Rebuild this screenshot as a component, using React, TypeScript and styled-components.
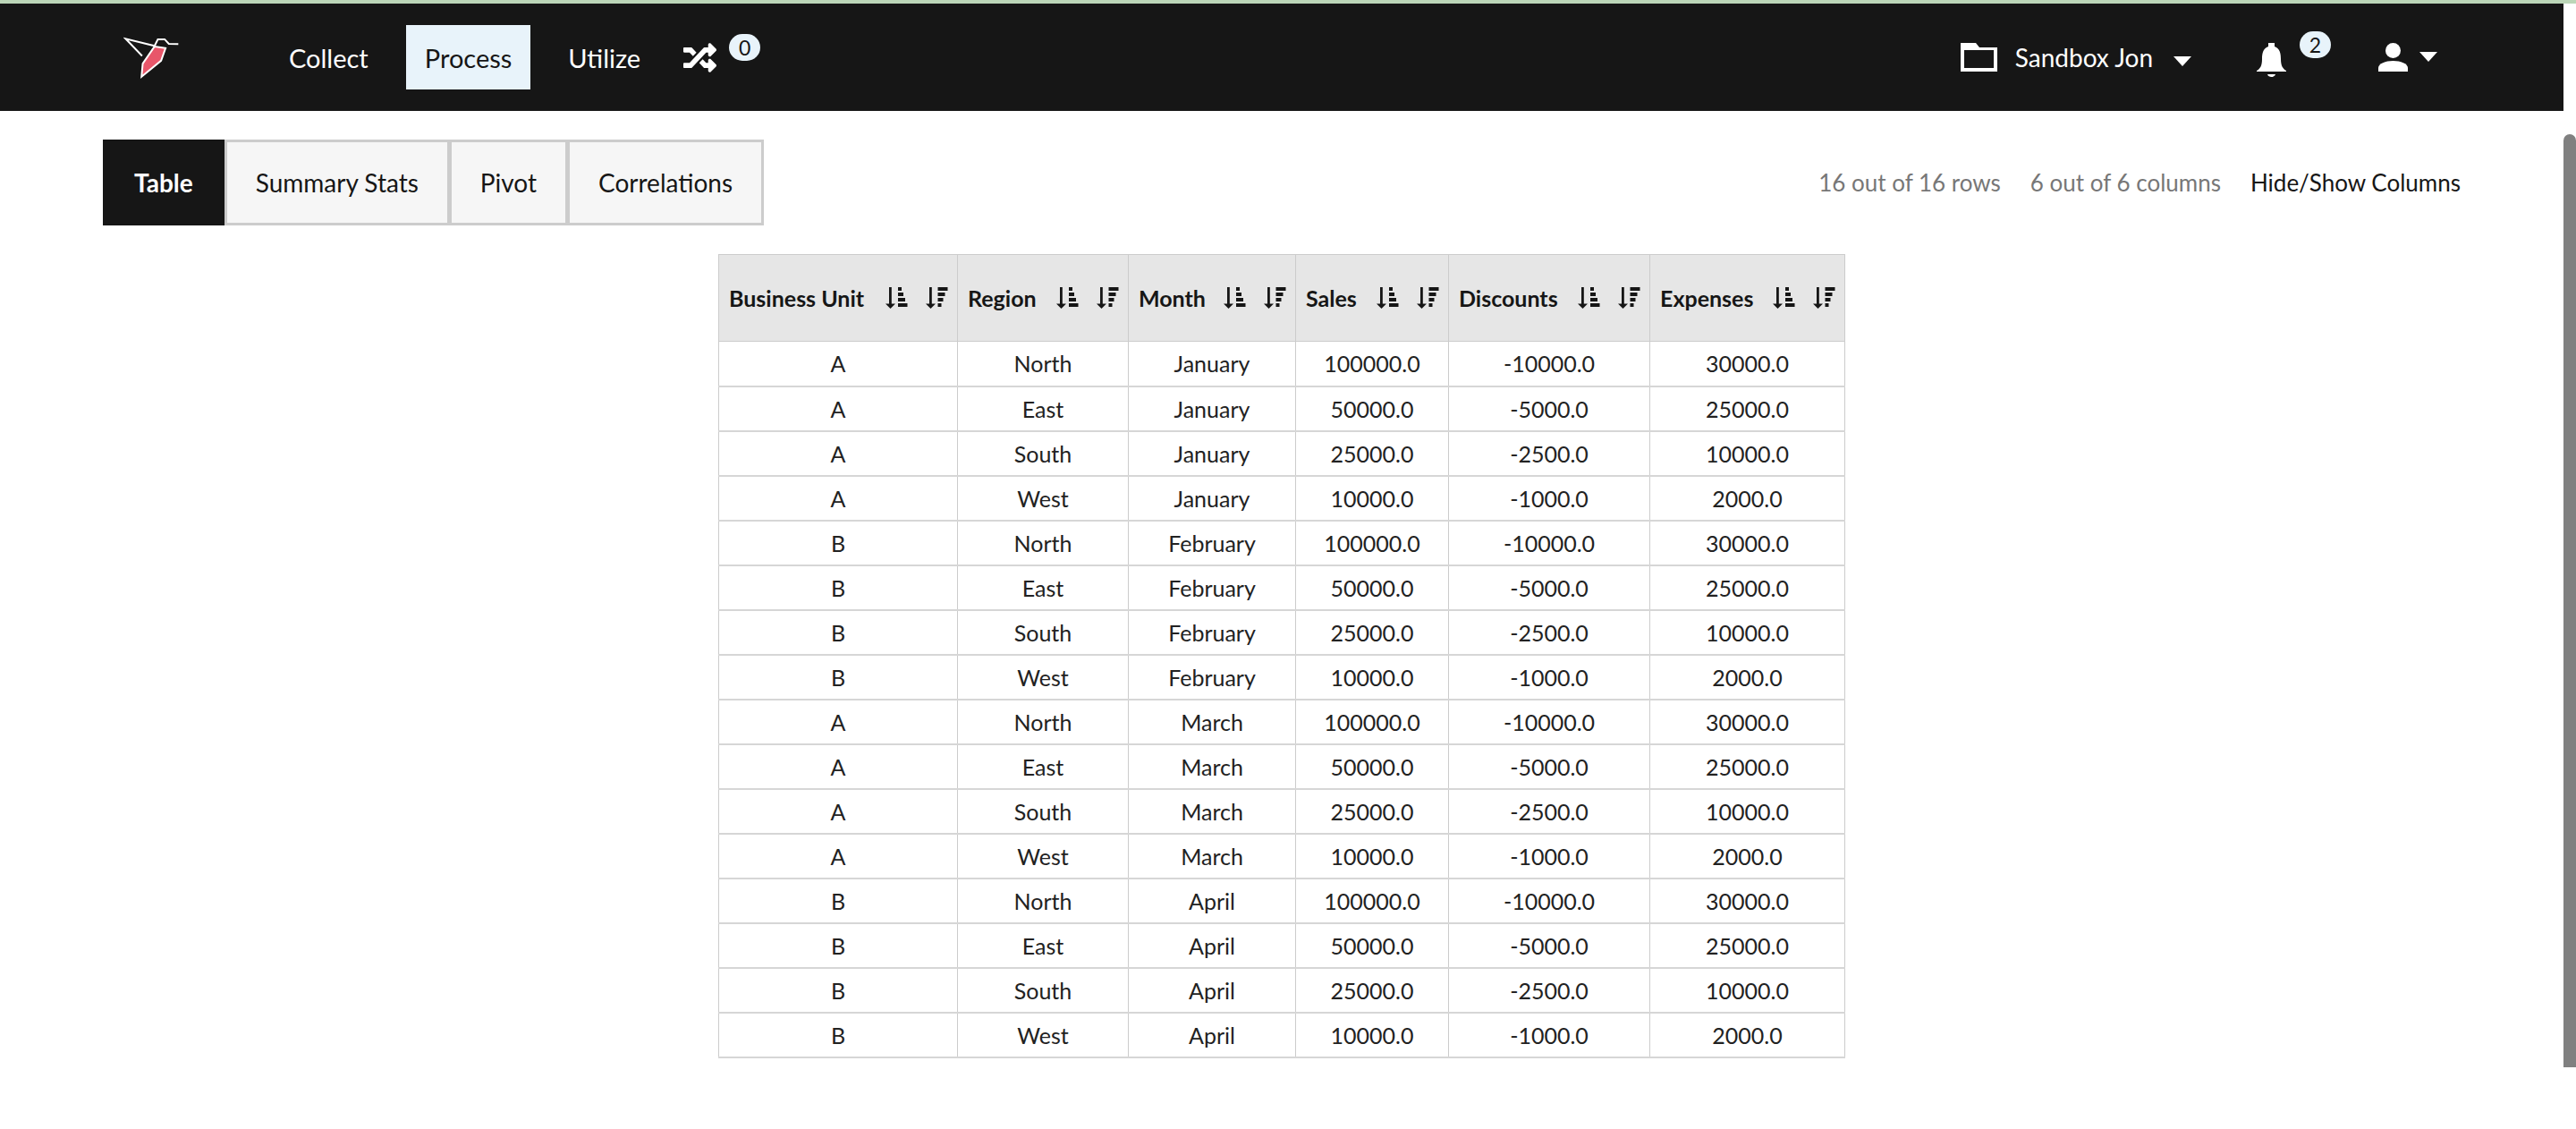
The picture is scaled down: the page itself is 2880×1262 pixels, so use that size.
import React from 'react'
import styled, { createGlobalStyle } from 'styled-components'
import { FaRandom } from 'react-icons/fa'

const GlobalStyle = createGlobalStyle`
  html, body {
    margin: 0;
    padding: 0;
    background: #fff;
    overflow: hidden;
    font-family: 'Lato', 'Liberation Sans', sans-serif;
  }
`

const Page = styled.div`
  width: 2880px;
  height: 1262px;
  display: flex;
  flex-direction: column;
  overflow: hidden;
`

const TopStrip = styled.div`
  height: 4px;
  flex: none;
  background: #bcd6b8;
`

const Body = styled.div`
  flex: 1;
  display: flex;
  min-height: 0;
`

const Main = styled.div`
  flex: 1;
  min-width: 0;
`

const ScrollTrack = styled.div`
  width: 14px;
  flex: none;
  padding-top: 146px;
`

const ScrollThumb = styled.div`
  height: 1043px;
  background: #808080;
  border-radius: 7px 7px 0 0;
`

const Header = styled.header`
  height: 120px;
  background: #161616;
  display: flex;
  align-items: center;
  padding: 0 141px 0 138px;
  box-sizing: border-box;
  color: #fff;
`

const Nav = styled.nav`
  display: flex;
  align-items: center;
  gap: 21px;
  margin-left: 101px;
`

const NavItem = styled.a<{ $active?: boolean }>`
  height: 72px;
  padding: 0 21px;
  display: flex;
  align-items: center;
  font-size: 29px;
  color: ${props => (props.$active ? '#161616' : '#fff')};
  background: ${props => (props.$active ? '#e8f3fa' : 'transparent')};
`

const IconBadgeWrap = styled.span<{ $left: number; $top: number }>`
  position: relative;
  display: flex;
  margin-left: ${props => props.$left}px;
  margin-top: ${props => props.$top}px;
`

const Badge = styled.span<{ $offsetX: number; $offsetY: number }>`
  position: absolute;
  left: ${props => props.$offsetX}px;
  top: ${props => props.$offsetY}px;
  width: 35px;
  height: 30px;
  border-radius: 15px;
  background: #e8f3fa;
  color: #161616;
  font-size: 23px;
  display: flex;
  align-items: center;
  justify-content: center;
`

const RightGroup = styled.div`
  margin-left: auto;
  display: flex;
  align-items: center;
`

const Workspace = styled.span`
  font-size: 28px;
  margin-left: 20px;
`

const Caret = styled.span<{ $left: number; $top: number }>`
  width: 0;
  height: 0;
  margin-left: ${props => props.$left}px;
  margin-top: ${props => props.$top}px;
  border-left: 10px solid transparent;
  border-right: 10px solid transparent;
  border-top: 11px solid #fff;
`

const Toolbar = styled.div`
  display: flex;
  align-items: center;
  justify-content: space-between;
  padding: 32px 115px;
`

const Tabs = styled.div`
  display: flex;
`

const Tab = styled.a<{ $active?: boolean }>`
  height: 96px;
  box-sizing: border-box;
  display: flex;
  align-items: center;
  padding: 0 32px;
  font-size: 28px;
  font-weight: ${props => (props.$active ? 700 : 400)};
  color: ${props => (props.$active ? '#fff' : '#161616')};
  background: ${props => (props.$active ? '#161616' : '#f6f6f6')};
  border: 3px solid ${props => (props.$active ? '#161616' : '#ccc')};
  margin-right: ${props => (props.$active ? 0 : -1)}px;
`

const Stats = styled.div`
  display: flex;
  gap: 33px;
  font-size: 26px;
`

const StatText = styled.span`
  color: #777;
`

const StatLink = styled.a`
  color: #161616;
`

const TableWrap = styled.div`
  display: flex;
  justify-content: center;
`

const DataTable = styled.table`
  width: 1259px;
  table-layout: fixed;
  border-collapse: collapse;
`

const HeadCell = styled.th<{ $width: number }>`
  width: ${props => props.$width}px;
  height: 97px;
  padding: 0 10px 0 11px;
  background: #e6e6e6;
  border: 1px solid #ccc;
  box-sizing: border-box;
`

const HeadInner = styled.div`
  display: flex;
  align-items: center;
  justify-content: space-between;
  font-size: 25px;
  font-weight: 700;
  color: #161616;
  white-space: nowrap;
`

const SortIcons = styled.span`
  display: flex;
  gap: 20px;
`

const Row = styled.tr`
  height: 50px;
`

const Cell = styled.td`
  padding: 0;
  border-left: 1px solid #ccc;
  border-right: 1px solid #ccc;
  border-bottom: 2px solid #d6d6d6;
  box-sizing: border-box;
  text-align: center;
  font-size: 25px;
  color: #222;
`

const Logo = () => (
  <svg width="63" height="47" viewBox="55 60 190 140" fill="none">
    <path d="M160 92 L197 98 L182 140 L116 194 L120 150 Z" fill="#e8566a" stroke="#fff" strokeWidth="6" strokeLinejoin="miter" />
    <path d="M118 124 L62 66 L160 90 L171 68 L194 68 L208 83 L240 84" stroke="#fff" strokeWidth="6" />
  </svg>
)

const FolderIcon = () => (
  <svg width="41" height="32" viewBox="0 0 41 32" fill="#fff">
    <path fillRule="evenodd" d="M0 0 H17 L21 5 H41 V32 H0 Z M4 8 V28 H37 V8 Z" />
  </svg>
)

const BellIcon = () => (
  <svg width="33" height="39" viewBox="0 0 33 39" fill="#fff">
    <path d="M13 0 H20 V4 C26 6 27 12 27 18 C27 25 29 29 33 31 V32 H0 V31 C4 29 6 25 6 18 C6 12 7 6 13 4 Z" />
    <path d="M12 35 H21 C20 39 13 39 12 35 Z" />
  </svg>
)

const UserIcon = () => (
  <svg width="33" height="32" viewBox="0 0 33 32" fill="#fff">
    <circle cx="16.5" cy="8.5" r="8.5" />
    <path d="M0 32 V28 C0 23 8 20 16.5 20 S33 23 33 28 V32 Z" />
  </svg>
)

// dir: bars get longer going down (asc) or shorter (desc)
const SortIcon = ({ dir }: { dir: 'asc' | 'desc' }) => {
  const widths = dir === 'asc' ? [4, 6, 8, 10.5] : [11, 8, 6, 4]
  const barX = dir === 'asc' ? 14 : 13.5
  return (
    <svg width="25" height="24" viewBox="0 0 25 24" fill="#161616">
      <rect x="4" y="0" width="2.8" height="19" />
      <path d="M0 18.5 H11 L5.5 24 Z" />
      {widths.map((w, i) => (
        <rect key={i} x={barX} y={i * 6} width={w} height="4" />
      ))}
    </svg>
  )
}

const columns = [
  { label: 'Business Unit', width: 267 },
  { label: 'Region', width: 191 },
  { label: 'Month', width: 187 },
  { label: 'Sales', width: 171 },
  { label: 'Discounts', width: 225 },
  { label: 'Expenses', width: 218 }
]

const regionValues = [
  ['North', '100000.0', '-10000.0', '30000.0'],
  ['East', '50000.0', '-5000.0', '25000.0'],
  ['South', '25000.0', '-2500.0', '10000.0'],
  ['West', '10000.0', '-1000.0', '2000.0']
]

const periods = [
  { unit: 'A', month: 'January' },
  { unit: 'B', month: 'February' },
  { unit: 'A', month: 'March' },
  { unit: 'B', month: 'April' }
]

const rows = periods.flatMap(p =>
  regionValues.map(([region, sales, discounts, expenses]) => [p.unit, region, p.month, sales, discounts, expenses])
)

export default function App() {
  return (
    <Page>
      <GlobalStyle />
      <TopStrip />
      <Body>
        <Main>
          <Header>
            <Logo />
            <Nav>
              <NavItem>Collect</NavItem>
              <NavItem $active>Process</NavItem>
              <NavItem>Utilize</NavItem>
            </Nav>
            <IconBadgeWrap $left={27} $top={0}>
              <FaRandom size={37} color="#fff" />
              <Badge $offsetX={51} $offsetY={-8}>0</Badge>
            </IconBadgeWrap>
            <RightGroup>
              <FolderIcon />
              <Workspace>Sandbox Jon</Workspace>
              <Caret $left={23} $top={8} />
              <IconBadgeWrap $left={73} $top={6}>
                <BellIcon />
                <Badge $offsetX={48} $offsetY={-13}>2</Badge>
              </IconBadgeWrap>
              <IconBadgeWrap $left={103} $top={0}>
                <UserIcon />
              </IconBadgeWrap>
              <Caret $left={13} $top={-2} />
            </RightGroup>
          </Header>
          <Toolbar>
            <Tabs>
              <Tab $active>Table</Tab>
              <Tab>Summary Stats</Tab>
              <Tab>Pivot</Tab>
              <Tab>Correlations</Tab>
            </Tabs>
            <Stats>
              <StatText>16 out of 16 rows</StatText>
              <StatText>6 out of 6 columns</StatText>
              <StatLink>Hide/Show Columns</StatLink>
            </Stats>
          </Toolbar>
          <TableWrap>
            <DataTable>
              <thead>
                <tr>
                  {columns.map(col => (
                    <HeadCell key={col.label} $width={col.width}>
                      <HeadInner>
                        {col.label}
                        <SortIcons>
                          <SortIcon dir="asc" />
                          <SortIcon dir="desc" />
                        </SortIcons>
                      </HeadInner>
                    </HeadCell>
                  ))}
                </tr>
              </thead>
              <tbody>
                {rows.map((row, i) => (
                  <Row key={i}>
                    {row.map((value, j) => (
                      <Cell key={j}>{value}</Cell>
                    ))}
                  </Row>
                ))}
              </tbody>
            </DataTable>
          </TableWrap>
        </Main>
        <ScrollTrack>
          <ScrollThumb />
        </ScrollTrack>
      </Body>
    </Page>
  )
}
